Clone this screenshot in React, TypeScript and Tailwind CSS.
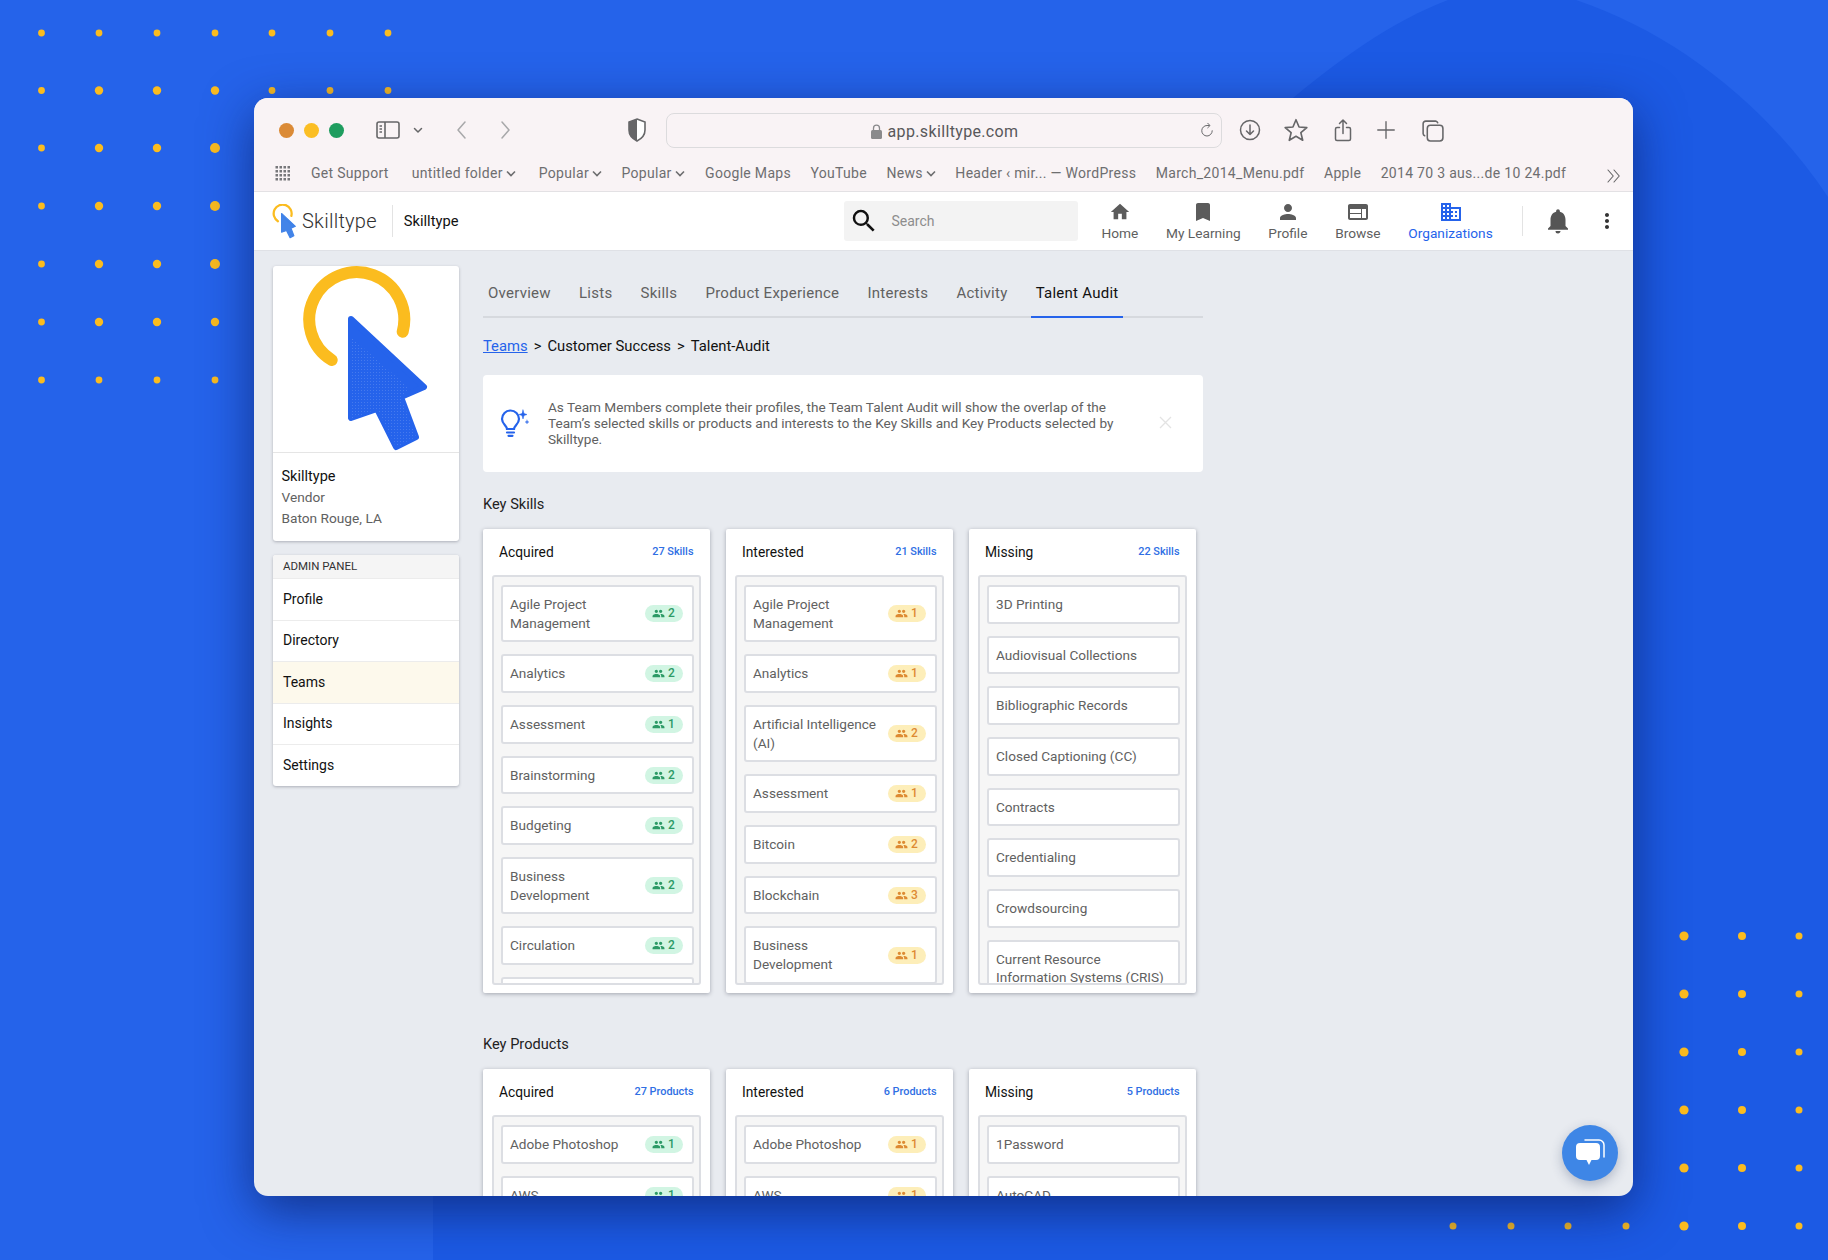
import { ReactNode } from "react";
import {
  MdBookmark,
  MdDomain,
  MdHome,
  MdMoreVert,
  MdNotifications,
  MdPeople,
  MdPerson,
  MdSearch,
  MdWeb,
} from "react-icons/md";

type Skill = { name: string; count?: number };

const BOOKMARKS = [
  { label: "Get Support", space: "mr-[3.5px]" },
  { label: "untitled folder", menu: true, space: "mr-[3.5px]" },
  { label: "Popular", menu: true },
  { label: "Popular", menu: true, space: "mr-[1px]" },
  { label: "Google Maps" },
  { label: "YouTube" },
  { label: "News", menu: true },
  { label: "Header ‹ mir... — WordPress" },
  { label: "March_2014_Menu.pdf" },
  { label: "Apple" },
  { label: "2014 70 3 aus...de 10 24.pdf" },
];

const TABS = ["Overview", "Lists", "Skills", "Product Experience", "Interests", "Activity", "Talent Audit"];
const ADMIN_LINKS = ["Profile", "Directory", "Teams", "Insights", "Settings"];

const SKILLS_ACQUIRED: Skill[] = [
  { name: "Agile Project Management", count: 2 },
  { name: "Analytics", count: 2 },
  { name: "Assessment", count: 1 },
  { name: "Brainstorming", count: 2 },
  { name: "Budgeting", count: 2 },
  { name: "Business Development", count: 2 },
  { name: "Circulation", count: 2 },
  { name: "" },
];

const SKILLS_INTERESTED: Skill[] = [
  { name: "Agile Project Management", count: 1 },
  { name: "Analytics", count: 1 },
  { name: "Artificial Intelligence (AI)", count: 2 },
  { name: "Assessment", count: 1 },
  { name: "Bitcoin", count: 2 },
  { name: "Blockchain", count: 3 },
  { name: "Business Development", count: 1 },
];

const SKILLS_MISSING: Skill[] = [
  { name: "3D Printing" },
  { name: "Audiovisual Collections" },
  { name: "Bibliographic Records" },
  { name: "Closed Captioning (CC)" },
  { name: "Contracts" },
  { name: "Credentialing" },
  { name: "Crowdsourcing" },
  { name: "Current Resource Information Systems (CRIS)" },
];

const DOT_COLS = [41.5, 99, 157, 215, 272, 330, 388];
const DOT_ROWS = [33, 90.5, 148, 206, 264, 322, 380];
const LOWER_COLS = [1453, 1511, 1568, 1626, 1684, 1742, 1799];
const LOWER_ROWS = [936, 994, 1052, 1110, 1168, 1226];

function Backdrop() {
  return (
    <svg className="absolute inset-0" width="1828" height="1260" viewBox="0 0 1828 1260">
      <path
        d="M1270 118C1335 60 1395 20 1448 0L1576 0C1680 35 1770 110 1828 197L1828 1260L433 1260L433 1100Z"
        fill="#1c5ae4"
      />
      {DOT_ROWS.map((y, r) =>
        DOT_COLS.map((x, c) => {
          const big = c === 3 && r >= 2 && r <= 4 ? 5 : c >= 1 && c <= 3 && r >= 1 && r <= 5 ? 4.2 : 3.4;
          return <circle key={`${r}-${c}`} cx={x} cy={y} r={big} fill="#fbbc1f" />;
        }),
      )}
      {LOWER_ROWS.map((y, r) =>
        LOWER_COLS.map((x, c) => (
          <circle key={`${r}-${c}`} cx={x} cy={y} r={c === 4 ? 4.6 : c === 5 ? 4 : 3.5} fill="#fbbc1f" />
        )),
      )}
    </svg>
  );
}

function Logo({ className, color, box }: { className: string; color: string; box: string }) {
  return (
    <svg className={className} viewBox={box}>
      <defs>
        <pattern id={`grain-${color.slice(1)}`} width="3" height="3" patternUnits="userSpaceOnUse">
          <circle cx="1.5" cy="1.5" r="0.45" fill="#ffffff" fillOpacity="0.3" />
        </pattern>
      </defs>
      <path
        d="M58.7 94A47.5 47.5 0 1 1 129.7 65.7"
        fill="none"
        stroke="#fbbc1f"
        strokeWidth="12"
        strokeLinecap="round"
      />
      <path
        d="M78 53L151 121L128 131L143 171L123 181L104 143L78 152Z"
        fill={color}
        stroke={color}
        strokeWidth="6"
        strokeLinejoin="round"
      />
      <path
        d="M77 70L136 122L128 131L143 171L123 181L104 143L77 153Z"
        fill={`url(#grain-${color.slice(1)})`}
      />
    </svg>
  );
}

function ToolIcon({ children, className }: { children: ReactNode; className?: string }) {
  return (
    <svg
      className={className ?? "h-6 w-6"}
      viewBox="0 0 24 24"
      fill="none"
      stroke="#666668"
      strokeWidth="1.5"
      strokeLinecap="round"
      strokeLinejoin="round"
    >
      {children}
    </svg>
  );
}

function BrowserBar() {
  return (
    <div className="border-b border-[#e3e1e4] bg-[#f9f3f5]">
      <div className="flex h-16 items-center pl-[25px]">
        <div className="flex gap-[10px]">
          <span className="size-[15px] rounded-full bg-[#db8a36]" />
          <span className="size-[15px] rounded-full bg-[#fbbe24]" />
          <span className="size-[15px] rounded-full bg-[#1f9d5f]" />
        </div>
        <svg className="ml-[32px] h-[18px] w-[24px]" viewBox="0 0 24 18" fill="none" stroke="#666668" strokeWidth="1.6">
          <rect x="1" y="1" width="22" height="16" rx="2" />
          <path d="M9 1V17M3.5 5H6M3.5 8H6M3.5 11H6" />
        </svg>
        <ToolIcon className="ml-[12px] h-3 w-3">
          <path d="M5 9L12 16L19 9" strokeWidth="3" />
        </ToolIcon>
        <ToolIcon className="ml-[26px] h-6 w-6">
          <path d="M15 4L8 12L15 20" stroke="#a8a8aa" />
        </ToolIcon>
        <ToolIcon className="ml-[19px] h-6 w-6">
          <path d="M9 4L16 12L9 20" stroke="#a8a8aa" />
        </ToolIcon>
        <svg className="ml-[110px] h-[24px] w-[20px]" viewBox="0 0 20 24">
          <path d="M10 1L18 4V12C18 17 14 21 10 23C6 21 2 17 2 12V4Z" fill="#ffffff" stroke="#666668" strokeWidth="1.6" />
          <path d="M10 1L2 4V12C2 17 6 21 10 23Z" fill="#666668" />
        </svg>
        <div className="ml-[19px] flex h-[35px] w-[556px] items-center rounded-[8px] border border-[#dcdbdd] pr-[5px] text-[#58585a]">
          <div className="flex flex-1 items-center justify-center gap-[6px] pl-[24px] pt-[3px] text-[16px] tracking-[0.35px]">
            <svg className="h-[15px] w-[11px]" viewBox="0 0 11 15" fill="#8a8a8c">
              <rect x="0" y="6" width="11" height="9" rx="1.5" />
              <path d="M2.5 7V4.2A3 3 0 0 1 8.5 4.2V7" fill="none" stroke="#8a8a8c" strokeWidth="1.3" />
            </svg>
            app.skilltype.com
          </div>
          <ToolIcon className="h-[18px] w-[18px]">
            <path d="M19 13A7 7 0 1 1 12 6H15M13 3L16 6L13 9" strokeWidth="1.3" />
          </ToolIcon>
        </div>
        <ToolIcon className="ml-[16px] h-[24px] w-[24px]">
          <circle cx="12" cy="12" r="9.5" />
          <path d="M12 7V16.5M8.5 13L12 16.5L15.5 13" />
        </ToolIcon>
        <ToolIcon className="ml-[21px] h-[26px] w-[26px]">
          <path d="M12 2.5L14.8 9.2L22 9.8L16.5 14.5L18.2 21.5L12 17.8L5.8 21.5L7.5 14.5L2 9.8L9.2 9.2Z" />
        </ToolIcon>
        <ToolIcon className="ml-[22px] h-[27px] w-[24px]">
          <path d="M8.5 9H6A1.5 1.5 0 0 0 4.5 10.5V20.5A1.5 1.5 0 0 0 6 22H18A1.5 1.5 0 0 0 19.5 20.5V10.5A1.5 1.5 0 0 0 18 9H15.5M12 15V1.5M8.5 5L12 1.5L15.5 5" />
        </ToolIcon>
        <ToolIcon className="ml-[20px] h-[22px] w-[22px]">
          <path d="M12 3V21M3 12H21" />
        </ToolIcon>
        <ToolIcon className="ml-[23px] h-[25px] w-[25px]">
          <rect x="7" y="7" width="15" height="15" rx="3" />
          <path d="M17 4.5A2.5 2.5 0 0 0 15 3H5.5A2.5 2.5 0 0 0 3 5.5V15A2.5 2.5 0 0 0 4.5 17" />
        </ToolIcon>
      </div>
      <div className="flex h-[29px] items-start pl-[20px] pr-[10px] text-[14px] tracking-[0.3px] text-[#6e6e70]">
        <svg className="mt-[3px] h-[16px] w-[17px]" viewBox="0 0 17 16" fill="#77777a">
          {[1, 5, 9, 13].map((y) =>
            [1.5, 5.5, 9.5, 13.5].map((x) => <rect key={`${x}-${y}`} x={x} y={y} width="2.5" height="2.5" />),
          )}
        </svg>
        <div className="ml-[20px] flex items-center gap-[19.5px] whitespace-nowrap leading-[22px]">
          {BOOKMARKS.map((b, i) => (
            <span key={i} className={`flex items-center gap-[3px] ${b.space ?? ""}`}>
              {b.label}
              {b.menu && (
                <svg className="h-[7px] w-[10px]" viewBox="0 0 10 7" fill="none" stroke="#6e6e70" strokeWidth="1.6">
                  <path d="M1 1.5L5 5.5L9 1.5" />
                </svg>
              )}
            </span>
          ))}
        </div>
        <ToolIcon className="ml-auto mt-[5px] h-[18px] w-[18px]">
          <path d="M4 4L11 12L4 20M12 4L19 12L12 20" />
        </ToolIcon>
      </div>
    </div>
  );
}

function NavItem({ icon, label, active }: { icon: ReactNode; label: string; active?: boolean }) {
  return (
    <div className={`flex flex-col items-center ${active ? "text-[#2563eb]" : "text-[#5f5f5f]"}`}>
      <div className="flex h-[24px] items-center justify-center text-[#5b5b5b]">{icon}</div>
      <span className="text-[13.7px] leading-[18px]">{label}</span>
    </div>
  );
}

function AppHeader() {
  return (
    <div className="flex h-[59px] items-center border-b border-[#dfe1e6] bg-white">
      <Logo className="ml-[18px] h-[35px] w-[25px]" color="#3f82e8" box="30 3 127 185" />
      <span className="ml-[5px] text-[20px] font-light tracking-[0.25px] text-[#303030]">Skilltype</span>
      <span className="ml-[15px] h-[32px] w-px bg-[#e3e3e3]" />
      <span className="ml-[11px] text-[14.7px] text-[#111]">Skilltype</span>
      <div className="ml-[386px] flex h-[40px] w-[234px] items-center rounded-[3px] bg-[#f3f3f3] pl-[5px] text-[14px] text-[#8d8d8d]">
        <MdSearch className="size-[30px] text-[#111]" />
        <span className="ml-[12px]">Search</span>
      </div>
      <div className="ml-[23px] flex gap-[27.7px]">
        <NavItem icon={<MdHome className="size-[22px]" />} label="Home" />
        <NavItem icon={<MdBookmark className="size-[24px]" />} label="My Learning" />
        <NavItem icon={<MdPerson className="size-[24px]" />} label="Profile" />
        <NavItem icon={<MdWeb className="size-[24px]" />} label="Browse" />
        <NavItem icon={<MdDomain className="size-[24px] text-[#2563eb]" />} label="Organizations" active />
      </div>
      <span className="ml-[29px] h-[30px] w-px bg-[#e3e3e3]" />
      <MdNotifications className="ml-[20px] size-[30px] text-[#555]" />
      <MdMoreVert className="ml-[22px] size-[24px] text-[#333]" />
    </div>
  );
}

function Sidebar() {
  return (
    <aside className="w-[186px] shrink-0">
      <div className="overflow-hidden rounded-[3px] bg-white shadow-[0_1px_3px_rgba(60,64,80,0.35)]">
        <div className="border-b border-[#e5e5e5]">
          <Logo className="h-[186px] w-[186px]" color="#2563eb" box="0 0 186 186" />
        </div>
        <div className="px-[8.5px] pb-[12px] pt-[13px] text-[13.7px] leading-[21px] text-[#616161]">
          <div className="text-[14.5px] text-[#111]">Skilltype</div>
          <div>Vendor</div>
          <div>Baton Rouge, LA</div>
        </div>
      </div>
      <div className="mt-[14px] overflow-hidden rounded-[3px] bg-white shadow-[0_1px_3px_rgba(60,64,80,0.35)]">
        <div className="flex h-[23px] items-center bg-[#f5f5f5] px-[10px] text-[11.5px] text-[#333]">ADMIN PANEL</div>
        {ADMIN_LINKS.map((link) => (
          <div
            key={link}
            className={`flex h-[41.5px] items-center border-t border-[#ececec] px-[10px] text-[14px] text-[#111] ${
              link === "Teams" ? "bg-[#fdf9ec]" : ""
            }`}
          >
            {link}
          </div>
        ))}
      </div>
    </aside>
  );
}

function Badge({ count, tone }: { count: number; tone: "green" | "amber" }) {
  const toneClass = tone === "green" ? "bg-[#d1f5e3] text-[#2c9a66]" : "bg-[#fdeeb9] text-[#dd8a32]";
  return (
    <span className={`flex h-[17px] w-[38px] shrink-0 items-center justify-center gap-[3px] rounded-full text-[12px] font-medium ${toneClass}`}>
      <MdPeople className="size-[13px]" />
      {count}
    </span>
  );
}

function SkillRow({ skill, tone }: { skill: Skill; tone: "green" | "amber" }) {
  return (
    <div className="flex min-h-[38.67px] shrink-0 items-center rounded-[3px] border-2 border-[#dcdee3] bg-white py-[8px] pl-[7px] pr-[9px] text-[13.6px] leading-[18.67px] text-[#616161]">
      <span className="flex-1 pr-[4px]">{skill.name}</span>
      {skill.count !== undefined && <Badge count={skill.count} tone={tone} />}
    </div>
  );
}

function Column({ title, total, items, tone }: { title: string; total: string; items: Skill[]; tone: "green" | "amber" }) {
  return (
    <div className="h-[464px] rounded-[2px] bg-white px-[8.5px] pt-[3px] shadow-[0_1px_4px_rgba(60,64,80,0.4)]">
      <div className="mb-[3px] flex h-[40px] items-center justify-between px-[7.5px]">
        <span className="text-[13.8px] text-[#111]">{title}</span>
        <span className="text-[10.9px] font-medium text-[#2f6fe4]">{total}</span>
      </div>
      <div className="flex h-[410px] flex-col gap-[12px] overflow-hidden rounded-[3px] border-2 border-[#dcdee3] bg-[#f6f6f6] pb-[8px] pl-[7.5px] pr-[5.5px] pt-[8px]">
        {items.map((item, i) => (
          <SkillRow key={i} skill={item} tone={tone} />
        ))}
      </div>
    </div>
  );
}

function MainPanel() {
  return (
    <main className="ml-[24px] w-[720px]">
      <div className="flex h-[52px] gap-[18.2px] border-b-2 border-[#d6d9de] pt-[4px] text-[15px] tracking-[0.25px] text-[#616161]">
        {TABS.map((tab) => (
          <div
            key={tab}
            className={`-mb-[2px] flex items-center border-b-2 px-[5px] ${
              tab === "Talent Audit" ? "border-[#2563eb] text-[#111]" : "border-transparent"
            }`}
          >
            {tab}
          </div>
        ))}
      </div>
      <div className="mt-[17px] flex gap-[6px] text-[14.8px] leading-[22px] text-[#111]">
        <span className="text-[#2563eb] underline">Teams</span>
        <span>&gt;</span>
        <span>Customer Success</span>
        <span>&gt;</span>
        <span>Talent-Audit</span>
      </div>
      <div className="mt-[18px] flex h-[97px] items-center rounded-[4px] bg-white pb-[2px] pl-[16px]">
        <svg className="h-[28px] w-[30px] shrink-0" viewBox="0 0 30 28" fill="none" stroke="#2563eb" strokeWidth="2.2" strokeLinecap="round">
          <path d="M8 20C8 17 3 15 3 10A8.5 8.5 0 0 1 20 10C20 15 15 17 15 20Z" />
          <path d="M8 23.5H15M9.5 26.8H13.5" />
          <path d="M24 1L25 4.5L28 5.5L25 6.5L24 10L23 6.5L20 5.5L23 4.5Z" fill="#2563eb" strokeWidth="0.5" />
          <path d="M28 11L28.5 12.5L30 13L28.5 13.5L28 15L27.5 13.5L26 13L27.5 12.5Z" fill="#2563eb" strokeWidth="0.3" />
        </svg>
        <p className="ml-[19px] w-[575px] text-[13.6px] leading-[16px] text-[#616161]">
          As Team Members complete their profiles, the Team Talent Audit will show the overlap of the Team’s selected skills or products and interests to the Key Skills and Key Products selected by Skilltype.
        </p>
        <svg className="ml-[36px] size-[13px]" viewBox="0 0 13 13" stroke="#e3e3e3" strokeWidth="1.3">
          <path d="M1 1L12 12M12 1L1 12" />
        </svg>
      </div>
      <h2 className="mt-[22px] text-[14.6px] leading-[20px] text-[#222]">Key Skills</h2>
      <div className="mt-[15px] grid w-[712.5px] grid-cols-3 gap-[16.5px]">
        <Column title="Acquired" total="27 Skills" items={SKILLS_ACQUIRED} tone="green" />
        <Column title="Interested" total="21 Skills" items={SKILLS_INTERESTED} tone="amber" />
        <Column title="Missing" total="22 Skills" items={SKILLS_MISSING} tone="green" />
      </div>
      <h2 className="mt-[41px] text-[14.6px] leading-[20px] text-[#222]">Key Products</h2>
      <div className="mt-[15px] grid w-[712.5px] grid-cols-3 gap-[16.5px]">
        <Column title="Acquired" total="27 Products" items={[{ name: "Adobe Photoshop", count: 1 }, { name: "AWS", count: 1 }]} tone="green" />
        <Column title="Interested" total="6 Products" items={[{ name: "Adobe Photoshop", count: 1 }, { name: "AWS", count: 1 }]} tone="amber" />
        <Column title="Missing" total="5 Products" items={[{ name: "1Password" }, { name: "AutoCAD" }]} tone="green" />
      </div>
    </main>
  );
}

export default function App() {
  return (
    <div className="relative h-[1260px] overflow-hidden bg-[#2563ea] font-['Roboto',sans-serif]">
      <Backdrop />
      <div className="relative pl-[254px] pt-[98px]">
        <div className="relative flex h-[1098px] w-[1379px] flex-col overflow-hidden rounded-[14px] bg-[#e8ebf0] shadow-[0_14px_50px_rgba(10,30,100,0.7)]">
          <BrowserBar />
          <AppHeader />
          <div className="flex min-h-0 flex-1 pl-[19px] pt-[15px]">
            <Sidebar />
            <MainPanel />
          </div>
          <button className="absolute bottom-[15px] right-[15px] flex size-[56px] items-center justify-center rounded-full bg-[#3e86e6] shadow-[0_4px_12px_rgba(40,60,100,0.3)]">
            <svg className="h-[28px] w-[30px]" viewBox="0 0 30 28" fill="#ffffff">
              <path d="M10 1H24A5 5 0 0 1 29 6V18" fill="none" stroke="#ffffff" strokeWidth="1.5" strokeLinecap="round" />
              <path d="M5 4H21A4 4 0 0 1 25 8V17A4 4 0 0 1 21 21H16.5L14 26L11.5 21H5A4 4 0 0 1 1 17V8A4 4 0 0 1 5 4Z" />
            </svg>
          </button>
        </div>
      </div>
    </div>
  );
}
